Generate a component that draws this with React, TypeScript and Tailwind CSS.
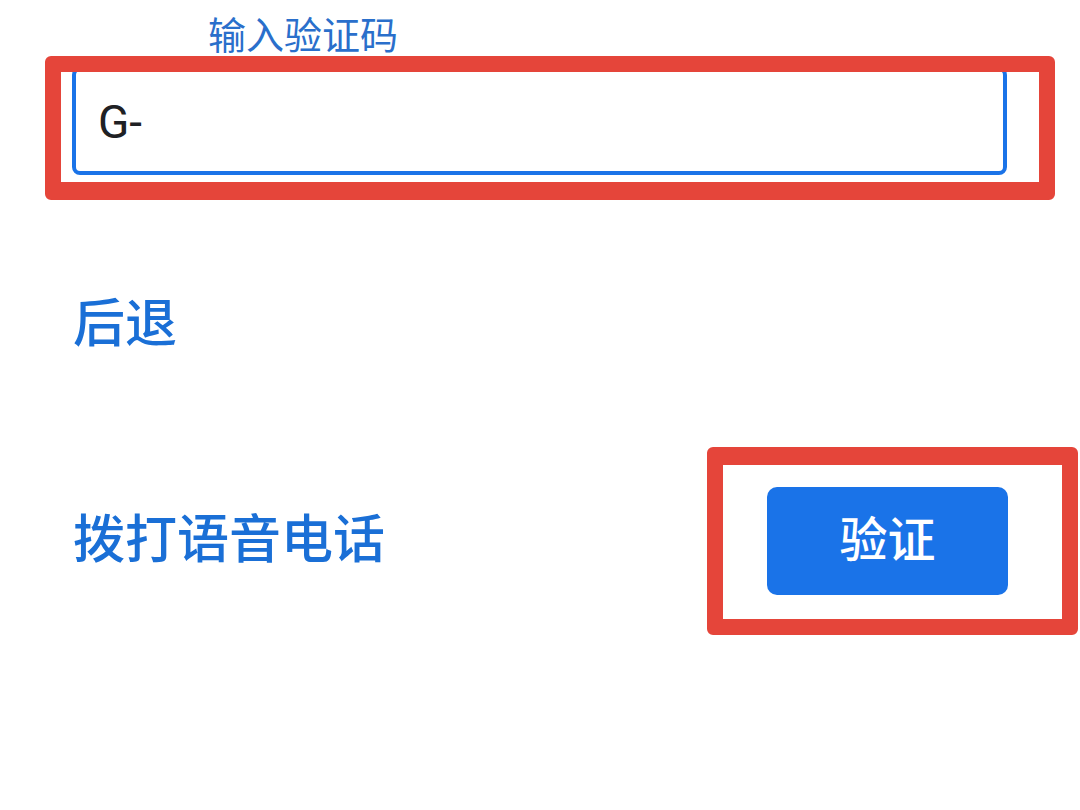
import React, { useState } from "react";

export default function App() {
  const [code, setCode] = useState("G-");

  return (
    <div className="relative w-[1080px] h-[810px] overflow-hidden bg-white font-['Roboto','Noto_Sans_CJK_SC',sans-serif]">
      {/* Label */}
      <div className="pl-[208px] pt-[17px] text-[38px] leading-[38px] text-[#2a6fcb]">输入验证码</div>

      {/* Code input */}
      <div className="ml-[72px] mt-[12px] flex h-[108px] w-[935px] items-center rounded-lg border-4 border-[#1a73e8] bg-white pl-[22px] pt-[3px]">
        <input
          value={code}
          onChange={(e) => setCode(e.target.value)}
          className="w-full bg-transparent text-[46px] text-[#202124] outline-none"
        />
      </div>

      {/* Back link */}
      <div className="mt-[124px] pl-[73px]">
        <button className="text-[52px] leading-[52px] font-medium text-[#1a6fd6]">后退</button>
      </div>

      {/* Bottom actions */}
      <div className="mt-[136px] flex items-center justify-between pl-[73px] pr-[72px]">
        <button className="text-[52px] leading-[52px] font-medium text-[#1a6fd6]">拨打语音电话</button>
        <button className="flex h-[108px] w-[241px] items-center justify-center rounded-[10px] bg-[#1a73e8] text-[48px] font-medium text-white">
          验证
        </button>
      </div>

      {/* Red annotation boxes */}
      <div className="pointer-events-none absolute left-[45px] top-[56px] h-[144px] w-[1010px] rounded-md border-[16px] border-b-[18px] border-[#e5453a]" />
      <div className="pointer-events-none absolute left-[707px] top-[447px] h-[188px] w-[371px] rounded-md border-[16px] border-t-[18px] border-[#e5453a]" />
    </div>
  );
}
